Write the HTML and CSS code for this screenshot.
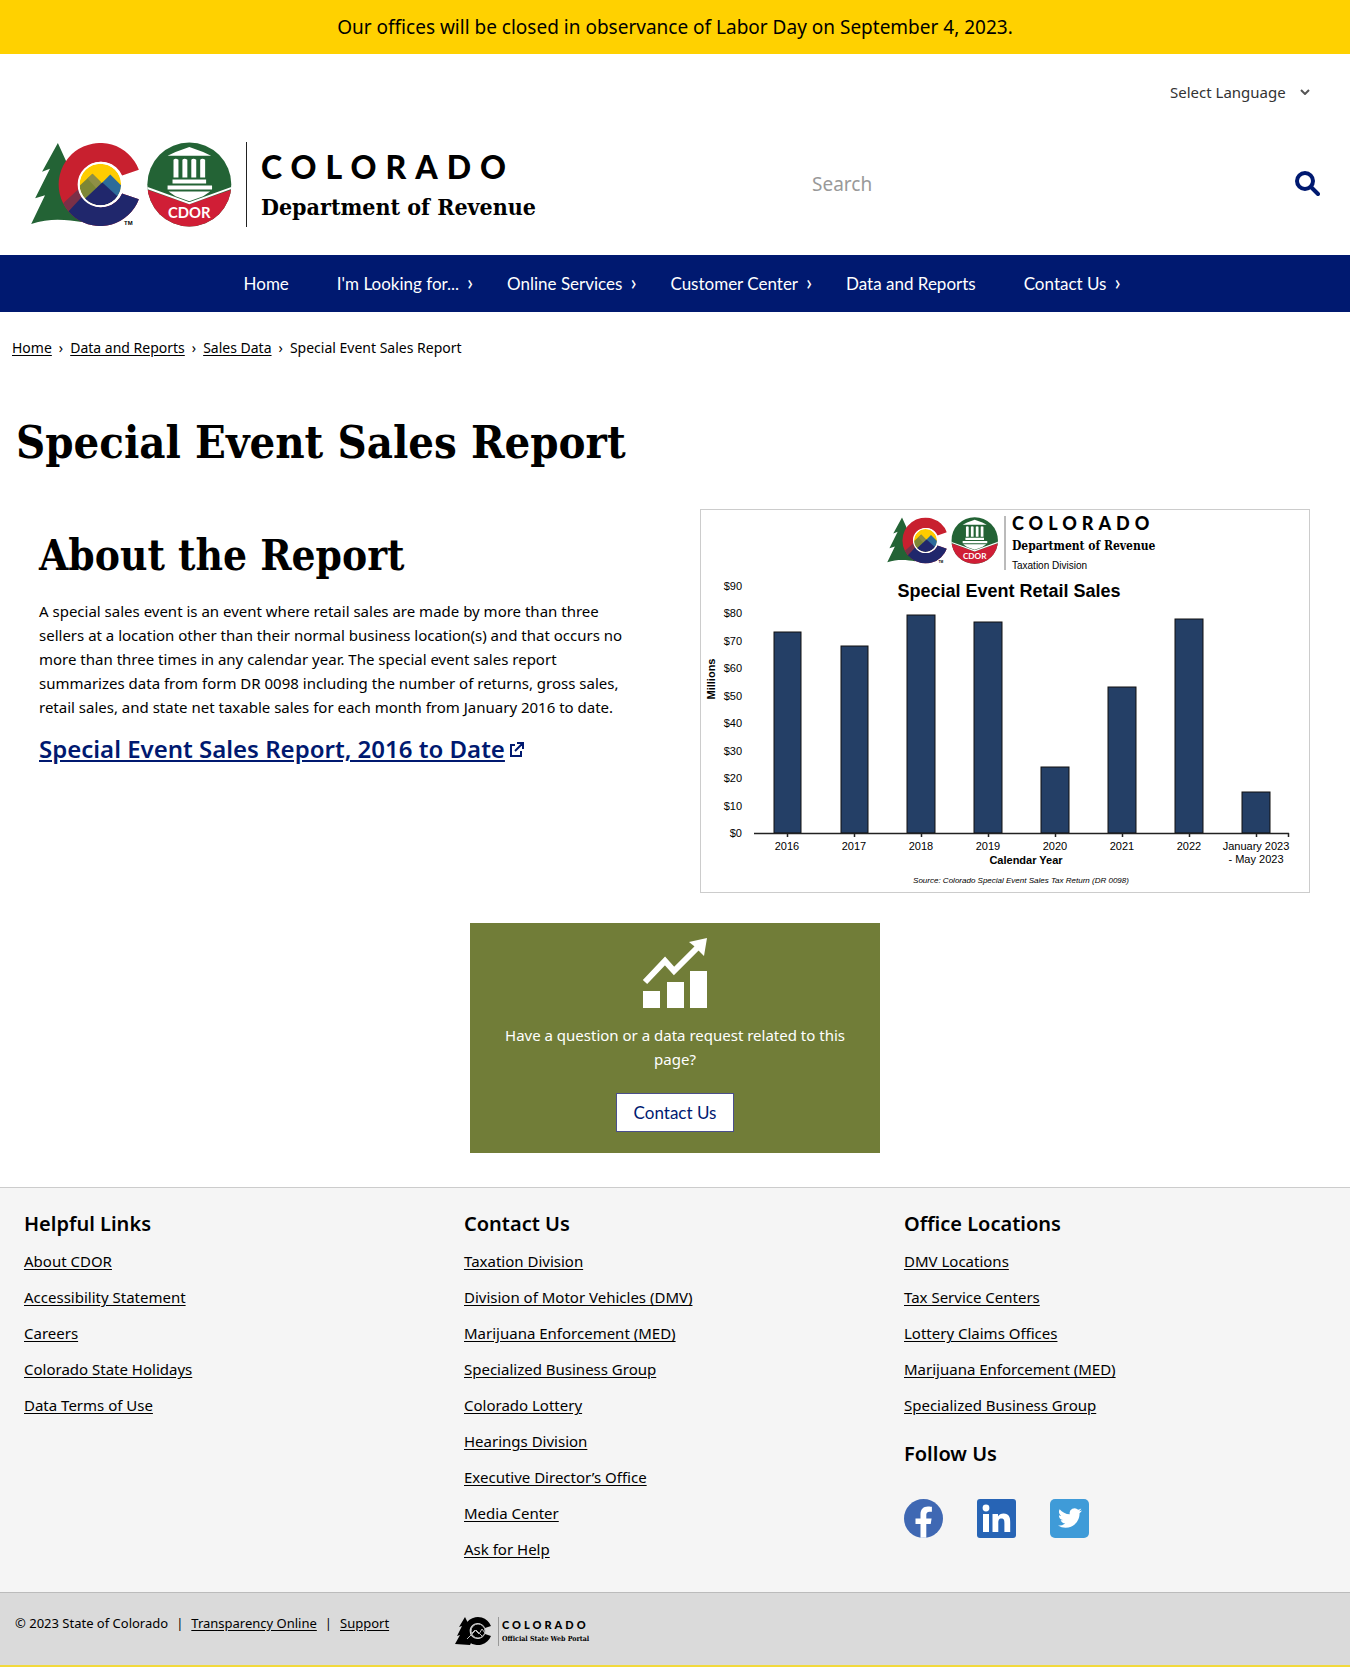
FILE: index.html
```html
<!DOCTYPE html>
<html lang="en">
<head>
<meta charset="utf-8">
<meta name="viewport" content="width=device-width, initial-scale=1">
<title>Special Event Sales Report | Department of Revenue</title>
<link rel="stylesheet" href="styles.css">
</head>
<body>
<svg class="defs" aria-hidden="true">
  <defs>
    <clipPath id="sky"><circle cx="70" cy="43" r="21"/></clipPath>
    <clipPath id="cshape"><path d="M109 28A42 42 0 1 0 109 58L92 52A23 23 0 1 1 92 34Z"/></clipPath>
    <clipPath id="seal"><circle cx="160" cy="43" r="42.500"/></clipPath>
    <symbol id="co-mark" viewBox="0 0 204 86">
      <path fill="#236335" d="M27 1l10 22 16 54-2 4C38 79 20 76 0 83L14 54 4 57 19 27l-8 3z"/>
      <g clip-path="url(#cshape)">
        <path fill="#c8202f" d="M20 0h100v86H20z"/>
        <path fill="#7a3048" d="M28 66l26-24 14 16-30 14-8 8z"/>
        <path fill="#20276c" d="M37 71l14-15 20-20 24 17 20-5v40H50z"/>
      </g>
      <g clip-path="url(#sky)">
        <path fill="#fc0" d="M45 20h50v46H45z"/>
        <path fill="#7d8635" d="M44 49l18-17 14 14-20 20z"/>
        <path fill="#2d6b9a" d="M60 53l20-20 16 16-2 12z"/>
        <path fill="#8f8f45" d="M62 32l9 9-5 6-9-10z"/>
        <path fill="#20276c" d="M45 66l27-25 24 22v8H45z"/>
      </g>
      <circle cx="70" cy="43" r="22" fill="none" stroke="#fff" stroke-width="2"/>
      <text x="94" y="84" class="tm">TM</text>
      <g clip-path="url(#seal)">
        <path fill="#236335" d="M117 0h86v86h-86z"/>
        <path fill="#d01e36" d="M117 48l43 15 43-15v40h-86z"/>
        <path fill="none" stroke="#fff" stroke-width="2" d="M116 46l44 16 44-16"/>
      </g>
      <path fill="#fff" d="M160 5l14 5 8 4h-44l8-4zM144 18q2-2 5 0v18h-5zM153 18q2-2 5 0v18h-5zM162 18q2-2 5 0v18h-5zM171 18q2-2 5 0v18h-5zM143 38h34v4h-34zM138 44h45v4h-45zM139 50h42l-7 5-14 5-14-5z"/>
      <text x="160" y="77" text-anchor="middle" class="seal-text">CDOR</text>
    </symbol>
  </defs>
</svg>

<div class="alert">Our offices will be closed in observance of Labor Day on September 4, 2023.</div>

<header class="header">
  <div class="language">
    <select aria-label="Select Language"><option>Select Language</option></select>
    <svg class="caret" viewBox="0 0 10 6" aria-hidden="true"><path d="M1 1l4 4 4-4" fill="none" stroke="#555" stroke-width="2"/></svg>
  </div>
  <div class="masthead">
    <a class="logo" href="#" aria-label="Colorado Department of Revenue">
      <svg class="logo-mark" aria-hidden="true"><use href="#co-mark"/></svg>
      <span class="logo-words"><span class="logo-state">COLORADO</span><span class="logo-dept">Department of Revenue</span></span>
    </a>
    <form class="search">
      <input type="text" placeholder="Search" aria-label="Search">
      <button type="button" aria-label="Submit search"><svg viewBox="0 0 26 26"><circle cx="11" cy="10" r="8" fill="none" stroke="#001970" stroke-width="4"/><path d="M17 16l7 7" stroke="#001970" stroke-width="4" stroke-linecap="round"/></svg></button>
    </form>
  </div>
</header>

<nav class="nav" aria-label="Main">
  <a href="#">Home</a>
  <a class="sub" href="#">I'm Looking for...</a>
  <a class="sub" href="#">Online Services</a>
  <a class="sub" href="#">Customer Center</a>
  <a href="#">Data and Reports</a>
  <a class="sub" href="#">Contact Us</a>
</nav>

<main>
  <nav class="crumbs" aria-label="Breadcrumb"><a href="#">Home</a><span>›</span><a href="#">Data and Reports</a><span>›</span><a href="#">Sales Data</a><span>›</span>Special Event Sales Report</nav>
  <h1>Special Event Sales Report</h1>
  <div class="columns">
    <section class="about">
      <h2>About the Report</h2>
      <p>A special sales event is an event where retail sales are made by more than three sellers at a location other than their normal business location(s) and that occurs no more than three times in any calendar year. The special event sales report summarizes data from form DR 0098 including the number of returns, gross sales, retail sales, and state net taxable sales for each month from January 2016 to date.</p>
      <h3><a href="#">Special Event Sales Report, 2016 to Date</a><svg viewBox="0 0 15 15" aria-hidden="true"><path d="M6 3H2v11h10V9M8 1h6v6M14 1L6 9" fill="none" stroke="#001970" stroke-width="2"/></svg></h3>
    </section>
    <figure class="chart">
      <svg viewBox="0 0 608 382" role="img" aria-label="Special Event Retail Sales by calendar year">
        <use href="#co-mark" x="186" y="7" width="112" height="47"/>
        <path d="M304 6v54" stroke="#777"/>
        <text x="311" y="20" class="c-state">COLORADO</text>
        <text x="311" y="40" class="c-dept">Department of Revenue</text>
        <text x="311" y="59" class="c-div">Taxation Division</text>
        <text x="308" y="87" class="c-title">Special Event Retail Sales</text>
        <g class="c-y">
          <text x="41" y="80">$90</text><text x="41" y="107">$80</text><text x="41" y="135">$70</text><text x="41" y="162">$60</text><text x="41" y="190">$50</text><text x="41" y="217">$40</text><text x="41" y="245">$30</text><text x="41" y="272">$20</text><text x="41" y="300">$10</text><text x="41" y="327">$0</text>
        </g>
        <text class="c-axis" transform="translate(14 169) rotate(-90)">Millions</text>
        <g class="c-bars">
          <rect x="73" y="122" width="27" height="201"/><rect x="140" y="136" width="27" height="187"/><rect x="206" y="105" width="28" height="218"/><rect x="273" y="112" width="28" height="211"/><rect x="340" y="257" width="28" height="66"/><rect x="407" y="177" width="28" height="146"/><rect x="474" y="109" width="28" height="214"/><rect x="541" y="282" width="28" height="41"/>
        </g>
        <path d="M53 323.500H588M86.500 323v4M153.500 323v4M220.500 323v4M287.500 323v4M354.500 323v4M421.500 323v4M488.500 323v4M555.500 323v4M587.500 323v4" stroke="#222" stroke-width="1.500" fill="none"/>
        <g class="c-x">
          <text x="86" y="340">2016</text><text x="153" y="340">2017</text><text x="220" y="340">2018</text><text x="287" y="340">2019</text><text x="354" y="340">2020</text><text x="421" y="340">2021</text><text x="488" y="340">2022</text><text x="555" y="340">January 2023</text><text x="555" y="353">- May 2023</text>
        </g>
        <text x="325" y="354" class="c-axis">Calendar Year</text>
        <text x="320" y="373" class="c-source">Source: Colorado Special Event Sales Tax Return (DR 0098)</text>
      </svg>
    </figure>
  </div>
  <section class="card">
    <svg viewBox="0 0 66 72" aria-hidden="true"><path fill="#fff" d="M1 54h17v17H1zM25 45h17v26H25zM48 34h17v37H48z"/><path d="M3 45L23 24l9 10L56 10" fill="none" stroke="#fff" stroke-width="6"/><path fill="#fff" d="M65 1l-3 18-5-5-5-5-5-4z"/></svg>
    <p>Have a question or a data request related to this page?</p>
    <a class="button" href="#">Contact Us</a>
  </section>
</main>

<footer>
  <div class="links">
    <section>
      <h4>Helpful Links</h4>
      <ul><li><a href="#">About CDOR</a></li><li><a href="#">Accessibility Statement</a></li><li><a href="#">Careers</a></li><li><a href="#">Colorado State Holidays</a></li><li><a href="#">Data Terms of Use</a></li></ul>
    </section>
    <section>
      <h4>Contact Us</h4>
      <ul><li><a href="#">Taxation Division</a></li><li><a href="#">Division of Motor Vehicles (DMV)</a></li><li><a href="#">Marijuana Enforcement (MED)</a></li><li><a href="#">Specialized Business Group</a></li><li><a href="#">Colorado Lottery</a></li><li><a href="#">Hearings Division</a></li><li><a href="#">Executive Director’s Office</a></li><li><a href="#">Media Center</a></li><li><a href="#">Ask for Help</a></li></ul>
    </section>
    <section>
      <h4>Office Locations</h4>
      <ul><li><a href="#">DMV Locations</a></li><li><a href="#">Tax Service Centers</a></li><li><a href="#">Lottery Claims Offices</a></li><li><a href="#">Marijuana Enforcement (MED)</a></li><li><a href="#">Specialized Business Group</a></li></ul>
      <h4 class="follow">Follow Us</h4>
      <div class="social">
        <a href="#" aria-label="Facebook"><svg viewBox="0 0 39 39"><circle cx="19.500" cy="19.500" r="19.500" fill="#3f68b3"/><path fill="#fff" d="M16.500 38.800V25H11.500v-5.500h5V15.200c0-5 3-7.700 7.400-7.700 2.200 0 4 .3 4 .3v5h-2.400c-2.400 0-3.200 1.500-3.200 3v3.700h5.300l-.9 5.500h-4.400v13.800z"/></svg></a>
        <a href="#" aria-label="LinkedIn"><svg viewBox="0 0 39 39"><rect width="39" height="39" rx="3" fill="#2764b5"/><circle cx="9" cy="9" r="3.400" fill="#fff"/><path fill="#fff" d="M6 15h6v18H6zM15.500 15h5.500v2.500c1-1.800 3-3 5.600-3 5.400 0 6.600 3.600 6.600 8.500v10h-5.800v-9c0-2.400-.2-4.600-2.900-4.600s-3.200 2-3.200 4.500V33h-5.800z"/></svg></a>
        <a href="#" aria-label="Twitter"><svg viewBox="0 0 39 39"><rect width="39" height="39" rx="5" fill="#3f9bd8"/><path fill="#fff" transform="translate(8 7)" d="M23.950 4.570a10 10 0 0 1-2.820.77 4.960 4.960 0 0 0 2.160-2.720c-.95.550-2 .950-3.130 1.180a4.920 4.920 0 0 0-8.380 4.480C7.690 8.100 4.070 6.130 1.640 3.160a4.820 4.820 0 0 0-.67 2.480c0 1.710.87 3.210 2.190 4.100a4.900 4.900 0 0 1-2.230-.61v.06a4.920 4.920 0 0 0 3.950 4.830 5 5 0 0 1-2.210.08 4.940 4.940 0 0 0 4.600 3.420A9.870 9.870 0 0 1 0 19.540a14 14 0 0 0 7.550 2.210c9.050 0 14-7.500 14-13.980 0-.21 0-.42-.02-.63a9.940 9.940 0 0 0 2.460-2.550z"/></svg></a>
      </div>
    </section>
  </div>
  <div class="bottom">
    <div class="legal">© 2023 State of Colorado<span>|</span><a href="#">Transparency Online</a><span>|</span><a href="#">Support</a></div>
    <a class="portal" href="#" aria-label="Colorado Official State Web Portal">
      <svg viewBox="0 0 140 32">
        <path d="M10 1l3 6 3 20-1 2-15-1 5-9-3 1 5-10-3 1z"/>
        <path d="M36 10A14 14 0 1 0 36 20l-6-2a8 8 0 1 1 0-6z"/>
        <circle cx="23" cy="15" r="7"/>
        <circle cx="23" cy="15" r="7" fill="none" stroke="#bbb"/>
        <path d="M12 23l9-9 6 6M17 17l3-3 4 4 3-5 3 4" fill="none" stroke="#bbb"/>
        <path d="M43.500 1v29" stroke="#999"/>
        <text x="47" y="13" class="p-state">COLORADO</text>
        <text x="47" y="25" class="p-line">Official State Web Portal</text>
      </svg>
    </a>
  </div>
</footer>
</body>
</html>
```
FILE: styles.css
```css
* { box-sizing: border-box; }
body { margin: 0; color: #000; background: #fff; font: 15px/24px "Noto Sans", sans-serif; }
a { color: inherit; text-underline-offset: 2px; }
h1, h2, .logo-dept { font-family: "DejaVu Serif Condensed", "DejaVu Serif", serif; font-weight: 700; }
.defs { display: block; width: 0; height: 0; }
.tm { font: 700 6px "Liberation Sans", sans-serif; }
.seal-text { font: 700 15px Lato, sans-serif; fill: #fff; }

.alert { padding: 13px 16px; background: #ffd100; font-size: 19px; line-height: 28px; text-align: center; }

.header { padding: 24px 30px 28px; }
.language { display: flex; justify-content: flex-end; align-items: center; gap: 14px; padding-right: 10px; }
.language select { appearance: none; width: 116px; height: 28px; padding: 0; border: 0; background: none; color: #333; font: inherit; }
.caret { width: 10px; height: 6px; }
.masthead { display: flex; justify-content: space-between; margin-top: 36px; }
.logo { display: flex; text-decoration: none; }
.logo-mark { width: 204px; height: 85px; }
.logo-words { display: flex; flex-direction: column; gap: 6px; margin-left: 12px; padding: 5px 0 0 14px; border-left: 1px solid #222; }
.logo-state { font: 900 32px/40px Lato, sans-serif; letter-spacing: 9px; }
.logo-dept { font-size: 23px; line-height: 28px; white-space: nowrap; }
.search { display: flex; align-items: center; width: 508px; height: 84px; }
.search input { flex: 1; min-width: 0; height: 44px; padding: 0; border: 0; background: none; font: 19px "Noto Sans", sans-serif; }
.search input::placeholder { color: #999; }
.search button { width: 26px; height: 26px; padding: 0; border: 0; background: none; }
.search svg { display: block; width: 26px; height: 26px; }

.nav { display: flex; justify-content: center; background: #001970; font: 17px/57px Lato, sans-serif; }
.nav a { padding: 0 24px; color: #fff; text-decoration: none; white-space: nowrap; }
.nav .sub { display: flex; padding-right: 0; }
.nav .sub::after { content: "›"; width: 16px; padding-left: 8px; font-size: 22px; line-height: 54px; }

.crumbs { padding: 24px 12px; font-size: 14px; }
.crumbs span { margin: 0 7px; }
h1 { margin: 29px 16px 36px; font-size: 45px; line-height: 60px; }
.columns { display: grid; grid-template-columns: 1fr 610px; column-gap: 60px; padding: 0 40px 0 39px; }
h2 { margin: 21px 0 17px; font-size: 42px; line-height: 52px; }
.about p { margin: 0; }
h3 { display: flex; align-items: center; gap: 4px; margin: 13px 0 0; color: #001970; font-size: 24px; font-weight: 600; line-height: 34px; }
h3 svg { width: 15px; height: 15px; }
.chart { margin: 0; border: 1px solid #ccc; }
.chart svg { display: block; width: 100%; }
.chart text { font-family: "Liberation Sans", sans-serif; }
.chart .c-state { font: 900 18px Lato, sans-serif; letter-spacing: 5px; }
.chart .c-dept { font: 700 12px "DejaVu Serif Condensed", "DejaVu Serif", serif; }
.chart .c-div { font-size: 10px; }
.chart .c-title { font-size: 18px; font-weight: 700; text-anchor: middle; }
.c-y { font-size: 11px; text-anchor: end; }
.c-x { font-size: 11px; text-anchor: middle; }
.chart .c-axis { font-size: 11px; font-weight: 700; text-anchor: middle; }
.chart .c-source { font-size: 8px; font-style: italic; text-anchor: middle; }
.c-bars { fill: #243f66; stroke: #111; }

.card { display: flex; flex-direction: column; align-items: center; width: 410px; margin: 30px auto 34px; padding: 14px 24px 21px; background: #717d38; color: #fff; text-align: center; }
.card svg { width: 66px; height: 72px; }
.card p { margin: 14px 0 22px; }
.button { padding: 6px 17px; border: 1px solid #4b4f8c; background: #fff; color: #001970; font: 17px/25px Lato, sans-serif; text-decoration: none; }

footer { border-top: 1px solid #ccc; background: #f5f5f5; }
.links { display: grid; grid-template-columns: repeat(3, 1fr); column-gap: 20px; padding: 22px 26px 25px 24px; }
h4 { margin: 0 0 5px; font-size: 20px; font-weight: 600; line-height: 28px; }
ul { margin: 0; padding: 0; list-style: none; }
li { line-height: 36px; }
.follow { margin: 17px 0 31px; }
.social { display: flex; gap: 34px; }
.social svg { display: block; width: 39px; height: 39px; }
.bottom { display: flex; gap: 66px; padding: 18px 15px 17px; border-top: 1px solid #bbb; border-bottom: 2px solid #f2d93c; background: #dadada; font-size: 13px; }
.legal span { margin: 0 8px; }
.portal svg { display: block; width: 140px; height: 32px; margin-top: 5px; }
.p-state { font: 900 11px Lato, sans-serif; letter-spacing: 3px; }
.p-line { font: 700 7px "DejaVu Serif Condensed", "DejaVu Serif", serif; }
```
